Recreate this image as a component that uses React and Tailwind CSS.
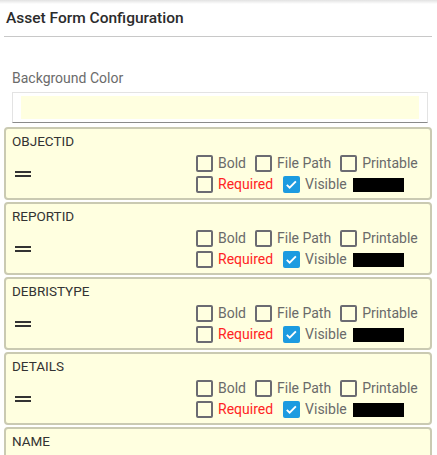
import React from 'react'

const FIELDS = ['OBJECTID', 'REPORTID', 'DEBRISTYPE', 'DETAILS', 'NAME']

function Box({ checked }) {
  if (checked) {
    return (
      <span className="w-[17px] h-[17px] rounded-[2px] bg-[#1c9be0] flex items-center justify-center shrink-0">
        <svg viewBox="0 0 24 24" className="w-[15px] h-[15px]" fill="none" stroke="white" strokeWidth={3}>
          <path d="M4.5 12.5l4.5 4.5 10-10" />
        </svg>
      </span>
    )
  }
  return <span className="w-[17px] h-[17px] rounded-[2px] border-2 border-[#6b6b72] bg-transparent shrink-0" />
}

function Check({ label, checked, red }) {
  return (
    <div className="flex items-center gap-[5px]">
      <Box checked={checked} />
      <span className={red ? 'text-[#ff2424]' : 'text-[#6a6a6a]'}>{label}</span>
    </div>
  )
}

function FieldCard({ name }) {
  return (
    <div className="h-[73px] shrink-0 border-2 border-[#cacab2] rounded-[4px] bg-[#ffffe0] px-[6px] pt-[2px] pb-[4px]">
      <div className="text-[13.5px] leading-[20px] text-[#333]">{name}</div>
      <div className="flex items-center mt-[3px]">
        <div className="ml-[3px] flex flex-col gap-[2px] w-[16px]">
          <span className="h-[2px] bg-[#333]" />
          <span className="h-[2px] bg-[#333]" />
        </div>
        <div className="ml-[165px] flex flex-col gap-[2px] text-[14px] leading-[19px]">
          <div className="flex items-center gap-[9px]">
            <Check label="Bold" />
            <Check label="File Path" />
            <Check label="Printable" />
          </div>
          <div className="flex items-center gap-[10px]">
            <Check label="Required" red />
            <div className="flex items-center gap-[6px]">
              <Check label="Visible" checked />
              <span className="w-[51px] h-[14px] bg-black" />
            </div>
          </div>
        </div>
      </div>
    </div>
  )
}

export default function App() {
  return (
    <div className="w-[437px] h-[455px] overflow-hidden bg-white font-['Roboto',sans-serif]">
      <div className="h-[4px] bg-gradient-to-b from-[#e2e2e2] to-white" />
      <div className="px-[4px] pr-[5px]">
        <div className="h-[33px] border-b border-[#c8c8c8] pl-[2px] pt-[4px]">
          <div className="text-[15.5px] leading-[20px] font-medium text-[#2b2b2b]">Asset Form Configuration</div>
        </div>
        <div className="px-[8px] pr-0 mt-[31px]">
          <div className="text-[14px] leading-[20px] text-[#6b6b6b]">Background Color</div>
          <div className="mt-[4px] h-[31px] border border-[#e3e3e3] border-b-[#8a8a8a] px-[8px] pt-[3px] pb-[3px] w-[416px]">
            <div className="h-full bg-[#ffffe0]" />
          </div>
        </div>
        <div className="mt-[4px] flex flex-col gap-[2px]">
          {FIELDS.map(f => <FieldCard key={f} name={f} />)}
        </div>
      </div>
    </div>
  )
}
